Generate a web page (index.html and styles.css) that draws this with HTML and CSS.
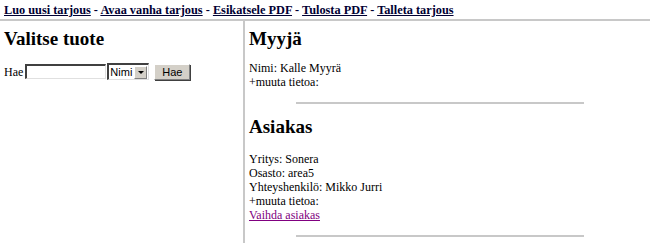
FILE: index.html
```html
<!DOCTYPE html>
<html lang="fi">
<head>
  <meta charset="UTF-8">
  <title>Tarjous</title>
  <link rel="stylesheet" href="styles.css">
</head>
<body>
<div class="nav">
  <a href="#">Luo uusi tarjous</a> - <a href="#">Avaa vanha tarjous</a> - <a href="#">Esikatsele PDF</a> - <a href="#">Tulosta PDF</a> - <a href="#">Talleta tarjous</a>
</div>
<hr class="top-rule">
<div class="columns">
  <div class="left">
    <h2>Valitse tuote</h2>
    <form class="search">
      <label>Hae</label>
      <input type="text" class="search-field">
      <span class="select-wrap">
        <select class="search-select"><option>Nimi</option></select>
      </span>
      <button type="button" class="search-btn">Hae</button>
    </form>
  </div>
  <div class="right">
    <h2>Myyjä</h2>
    <p class="first">Nimi: Kalle Myyrä<br>+muuta tietoa:</p>
    <hr class="section-rule">
    <h2 class="after-rule">Asiakas</h2>
    <p>Yritys: Sonera<br>Osasto: area5<br>Yhteyshenkilö: Mikko Jurri<br>+muuta tietoa:<br><a href="#" class="visited">Vaihda asiakas</a></p>
    <hr class="section-rule">
  </div>
</div>
</body>
</html>
```

FILE: styles.css
```css
body {
  margin: 0;
  font-family: "Liberation Serif", "Times New Roman", serif;
  font-size: 12px;
  line-height: 14px;
  color: #000;
  background: #fff;
}

.nav {
  padding: 3px 4px 0;
  height: 16px;
  font-size: 12.3px;
  font-weight: bold;
  color: #000033;
}

.nav a {
  color: #000033;
}

.top-rule {
  margin: 0;
  height: 0;
  border: none;
  border-top: 2px solid #c8c8c8;
}

.columns {
  display: flex;
  height: 222px;
}

.left {
  width: 239px;
  padding: 0 0 0 4px;
  border-right: 2px solid #c8c8c8;
}

.right {
  flex: 1;
  padding: 0 0 0 4px;
}

h2 {
  margin: 7px 0 0;
  font-size: 19px;
  line-height: 22px;
  font-weight: bold;
  color: #000;
}

h2.after-rule {
  margin-top: 12px;
}

.right p {
  margin: 14px 0 0;
}

.right p.first {
  margin-top: 11px;
}

.search {
  margin: 13px 0 0;
  display: flex;
  align-items: center;
}

.search label {
  margin-right: 2px;
}

.search-field {
  width: 81px;
  height: 15px;
  box-sizing: border-box;
  padding: 0;
  margin: 0 1px 0 0;
  border: 1px solid #e0e0e0;
  border-top: 2px solid #404040;
  border-left: 2px solid #404040;
  font-size: 11px;
}

.select-wrap {
  position: relative;
  display: inline-block;
  width: 42px;
  height: 17px;
  box-sizing: border-box;
  border: 1px solid #e0e0e0;
  border-top: 2px solid #404040;
  border-left: 2px solid #404040;
  background: #fff;
}

.search-select {
  appearance: none;
  -webkit-appearance: none;
  width: 100%;
  height: 100%;
  border: none;
  padding: 0 0 0 1px;
  margin: 0;
  background: transparent;
  font-family: "Liberation Sans", Arial, sans-serif;
  font-size: 11px;
  color: #000;
}

/* little dropdown button */
.select-wrap::after {
  content: "";
  position: absolute;
  top: 1px;
  right: 1px;
  width: 11px;
  height: 11px;
  background: #d4d0c8;
  border: 1px solid #808080;
  border-top-color: #fff;
  border-left-color: #fff;
  pointer-events: none;
}

.select-wrap::before {
  content: "";
  position: absolute;
  top: 6px;
  right: 4px;
  border-left: 3px solid transparent;
  border-right: 3px solid transparent;
  border-top: 3px solid #000;
  z-index: 1;
  pointer-events: none;
}

.search-btn {
  margin-left: 5px;
  width: 36px;
  height: 16px;
  padding: 0;
  font-family: "Liberation Sans", Arial, sans-serif;
  font-size: 11px;
  color: #000;
  background: #d4d0c8;
  border: 1px solid #808080;
  border-top-color: #fff;
  border-left-color: #fff;
  box-shadow: 1px 1px 0 #404040;
  border-radius: 0;
}

.section-rule {
  width: 288px;
  margin: 13px 0 0 47px;
  height: 0;
  border: none;
  border-top: 2px solid #c8c8c8;
}

a.visited {
  color: #800080;
}
```
